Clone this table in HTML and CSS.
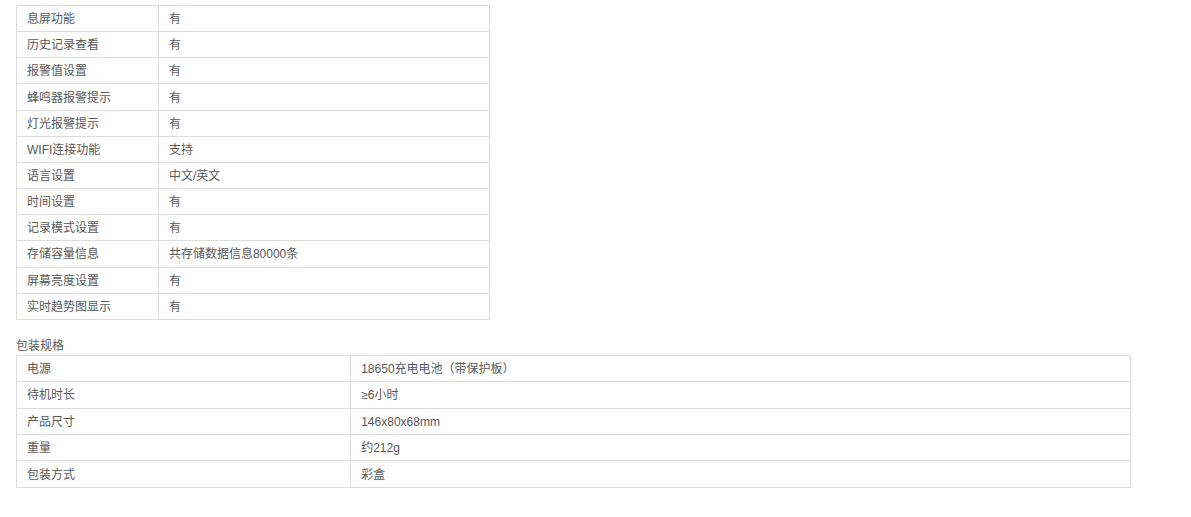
FILE: index.html
```html
<!DOCTYPE html>
<html lang="zh">
<head>
<meta charset="utf-8">
<link rel="stylesheet" href="styles.css">
</head>
<body>
<div class="page">
  <table class="spec narrow">
    <tr><td class="k">息屏功能</td><td>有</td></tr>
    <tr><td class="k">历史记录查看</td><td>有</td></tr>
    <tr><td class="k">报警值设置</td><td>有</td></tr>
    <tr><td class="k">蜂鸣器报警提示</td><td>有</td></tr>
    <tr><td class="k">灯光报警提示</td><td>有</td></tr>
    <tr><td class="k">WIFI连接功能</td><td>支持</td></tr>
    <tr><td class="k">语言设置</td><td>中文/英文</td></tr>
    <tr><td class="k">时间设置</td><td>有</td></tr>
    <tr><td class="k">记录模式设置</td><td>有</td></tr>
    <tr><td class="k">存储容量信息</td><td>共存储数据信息80000条</td></tr>
    <tr><td class="k">屏幕亮度设置</td><td>有</td></tr>
    <tr><td class="k">实时趋势图显示</td><td>有</td></tr>
  </table>
  <div class="title">包装规格</div>
  <table class="spec wide">
    <tr><td class="k">电源</td><td>18650充电电池（带保护板）</td></tr>
    <tr><td class="k">待机时长</td><td>≥6小时</td></tr>
    <tr><td class="k">产品尺寸</td><td>146x80x68mm</td></tr>
    <tr><td class="k">重量</td><td>约212g</td></tr>
    <tr><td class="k">包装方式</td><td>彩盒</td></tr>
  </table>
</div>
</body>
</html>
```

FILE: styles.css
```css
html, body {
  margin: 0;
  padding: 0;
  background: #fff;
}
.page {
  padding: 5px 16px;
  font-family: "Liberation Sans", "Noto Sans CJK SC", sans-serif;
  font-size: 12px;
  color: #595959;
}
.spec {
  border-collapse: collapse;
  table-layout: fixed;
}
.narrow { width: 474px; }
.wide { width: 1115px; }
.spec td {
  box-sizing: border-box;
  border: 1px solid #dcdcdc;
  height: 26.17px;
  padding: 1px 10px 0;
  line-height: 16px;
  vertical-align: middle;
}
.wide td { height: 26.4px; }
.spec td.k { width: 30%; }
.title {
  margin-top: 15px;
  height: 20px;
  padding-top: 3px;
  box-sizing: border-box;
  line-height: 17px;
}
```
